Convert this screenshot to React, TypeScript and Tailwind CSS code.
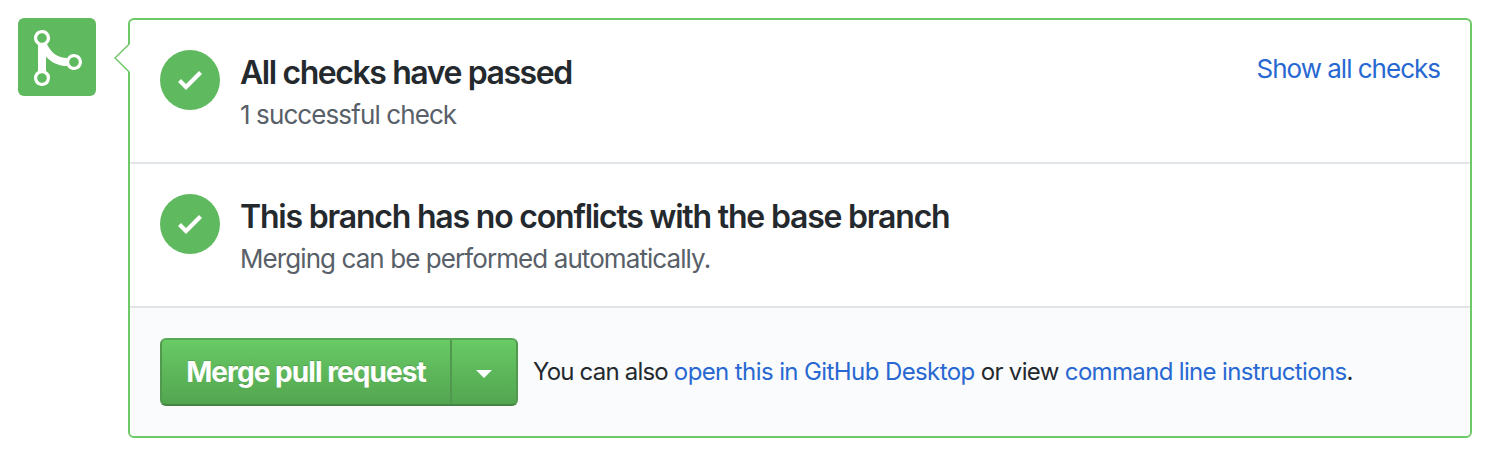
import React from "react";

function MergeIcon() {
  return (
    <svg viewBox="0 0 12 16" className="h-16 w-12 fill-white" aria-hidden="true">
      <path
        fillRule="evenodd"
        d="M10 7c-.73 0-1.38.41-1.73 1.02V8C7.22 7.98 6 7.64 5.14 6.98c-.75-.58-1.5-1.61-1.89-2.44A1.993 1.993 0 0 0 2 .99C.89.99 0 1.89 0 3a2 2 0 0 0 1 1.72v6.56c-.59.35-1 .99-1 1.72 0 1.11.89 2 2 2a1.993 1.993 0 0 0 1-3.72V7.67c.67.7 1.44 1.27 2.3 1.69.86.42 2.03.63 2.97.64v-.02c.36.61 1 1.02 1.73 1.02 1.11 0 2-.89 2-2 0-1.11-.89-2-2-2zm-6.8 6c0 .66-.55 1.2-1.2 1.2-.65 0-1.2-.55-1.2-1.2 0-.65.55-1.2 1.2-1.2.65 0 1.2.55 1.2 1.2zM2 4.2C1.34 4.2.8 3.65.8 3c0-.65.55-1.2 1.2-1.2.65 0 1.2.55 1.2 1.2 0 .65-.55 1.2-1.2 1.2zm8 6c-.66 0-1.2-.55-1.2-1.2 0-.65.55-1.2 1.2-1.2.65 0 1.2.55 1.2 1.2 0 .65-.55 1.2-1.2 1.2z"
      />
    </svg>
  );
}

function StatusCheck() {
  return (
    <span className="flex size-[60px] shrink-0 items-center justify-center rounded-full bg-[#5fb95e]">
      <svg viewBox="0 0 12 16" className="h-8 w-6 fill-white" aria-hidden="true">
        <path d="M12 5l-8 8-4-4 1.5-1.5L4 10l6.5-6.5L12 5z" />
      </svg>
    </span>
  );
}

type StatusRowProps = {
  title: string;
  titleClass: string;
  detail: string;
  detailClass: string;
  action?: React.ReactNode;
};

function StatusRow({ title, titleClass, detail, detailClass, action }: StatusRowProps) {
  return (
    <section className="flex h-36 items-start border-b-2 border-[#e1e4e8] px-[30px] pt-[30px]">
      <StatusCheck />
      <div className="ml-5 flex-1 whitespace-nowrap">
        <h3 className={`mt-[3px] text-[32px] leading-[40px] font-semibold text-[#24292e] ${titleClass}`}>{title}</h3>
        <p className={`mt-[3px] text-[26px] leading-[38px] text-[#586069] ${detailClass}`}>{detail}</p>
      </div>
      {action}
    </section>
  );
}

export default function App() {
  return (
    <main className="flex h-[454px] w-[1490px] items-start gap-8 bg-white p-[18px] font-['Inter',sans-serif]">
      <div className="flex size-[78px] shrink-0 items-center justify-center rounded-[6px] bg-[#5fb95e] pt-0.5 pl-0.5">
        <MergeIcon />
      </div>
      <div className="relative h-[420px] w-[1344px] rounded-[6px] border-2 border-[#6cc966]">
        <svg viewBox="0 0 16 28" className="absolute top-6 -left-4 h-7 w-4" aria-hidden="true">
          <path d="M16 0L14.5 0L.8 14L14.5 28H16z" fill="white" />
          <path d="M15.2 0L1 14L15.2 28" fill="none" stroke="#6cc966" strokeWidth="1.4" />
        </svg>
        <StatusRow
          title="All checks have passed"
          titleClass="tracking-[-1.42px]"
          detail="1 successful check"
          detailClass="tracking-[-0.9px]"
          action={
            <a className="text-[26px] leading-[38px] whitespace-nowrap text-[#2868d2] tracking-[-1px]">
              Show all checks
            </a>
          }
        />
        <StatusRow
          title="This branch has no conflicts with the base branch"
          titleClass="tracking-[-1.2px]"
          detail="Merging can be performed automatically."
          detailClass="tracking-[-0.92px]"
        />
        <footer className="flex h-32 items-center rounded-b-[4px] bg-[#fafbfc] pl-[30px]">
          <div className="flex h-[68px] w-[358px] rounded-[6px] border-2 border-[#51994f] border-t-[#59a856] border-b-[#458444] bg-linear-to-b from-[#69cb66] to-[#52a44f] bg-origin-border text-white">
            <button className="box-content flex w-[288px] items-center justify-center border-r-2 border-[#50984e] text-[28px] font-bold whitespace-nowrap tracking-[-0.94px] [text-shadow:0_-1px_0_rgba(0,0,0,0.15)]">
              Merge pull request
            </button>
            <button className="flex flex-1 items-center justify-center" aria-label="Select merge method">
              <span className="mt-1 border-x-8 border-t-8 border-x-transparent border-t-white" />
            </button>
          </div>
          <p className="ml-[15px] text-[24px] leading-9 whitespace-nowrap text-[#24292e] tracking-[-0.66px]">
            <span className="tracking-[-0.8px]">You can also </span>
            <a className="tracking-[-0.6px] text-[#2868d2]">open this in GitHub Desktop</a> or view{" "}
            <a className="text-[#2868d2]">command line instructions</a>.
          </p>
        </footer>
      </div>
    </main>
  );
}
